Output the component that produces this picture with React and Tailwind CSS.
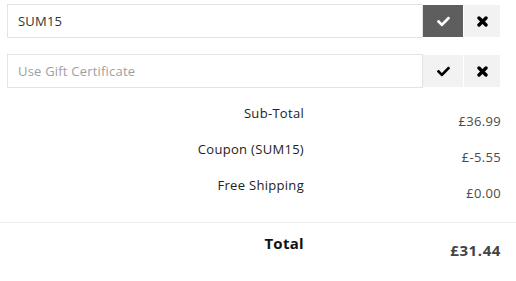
import { FaCheck } from 'react-icons/fa';

const rows = [
  { label: 'Sub-Total', value: '£36.99' },
  { label: 'Coupon (SUM15)', value: '£-5.55' },
  { label: 'Free Shipping', value: '£0.00' },
];

// FA4-style bold times
function BoldX() {
  return (
    <svg width="11" height="11" viewBox="0 0 11 11">
      <path d="M2 2 L9 9 M9 2 L2 9" stroke="currentColor" strokeWidth="3.4" strokeLinecap="round" />
    </svg>
  );
}

function CodeRow({ value, placeholder, active }) {
  return (
    <div className="flex items-center">
      <input
        readOnly
        value={value}
        placeholder={placeholder}
        className="w-[416px] h-[34px] border border-[#e3e3e3] px-[10px] text-[13px] tracking-[0.2px] text-[#333] placeholder-[#a0a0a0] outline-none"
      />
      <button
        className={`w-[40px] h-[32px] flex items-center justify-center ${active ? 'bg-[#5e5e5e] text-white' : 'bg-[#f2f2f2] text-black'}`}
      >
        <FaCheck size={13} />
      </button>
      <button className="ml-px w-[36px] h-[32px] flex items-center justify-center bg-[#f2f2f2] text-black">
        <BoldX />
      </button>
    </div>
  );
}

export default function App() {
  return (
    <div className="w-[516px] h-[281px] bg-white pt-[4px]" style={{ fontFamily: '"Open Sans", "Liberation Sans", sans-serif' }}>
      <div className="px-[7px] flex flex-col gap-[16px]">
        <CodeRow value="SUM15" active />
        <CodeRow value="" placeholder="Use Gift Certificate" />
      </div>

      <div className="mt-[15px]">
        {rows.map((r) => (
          <div key={r.label} className="flex h-[36px] text-[13px] leading-[20px] tracking-[0.3px]">
            <div className="w-[304px] text-right text-[#222]">{r.label}</div>
            <div className="flex-1 text-right pr-[15px] pt-[8px] text-[#4a4a4a]">{r.value}</div>
          </div>
        ))}
        <div className="mt-[11px] border-t border-[#ececec] pt-[10px] flex text-[15px] leading-[20px] tracking-[0.3px]">
          <div className="w-[304px] text-right font-bold text-[#111]">Total</div>
          <div className="flex-1 text-right pr-[15px] pt-[7px] font-bold text-[#444] tracking-[0.6px]">£31.44</div>
        </div>
      </div>
    </div>
  );
}
